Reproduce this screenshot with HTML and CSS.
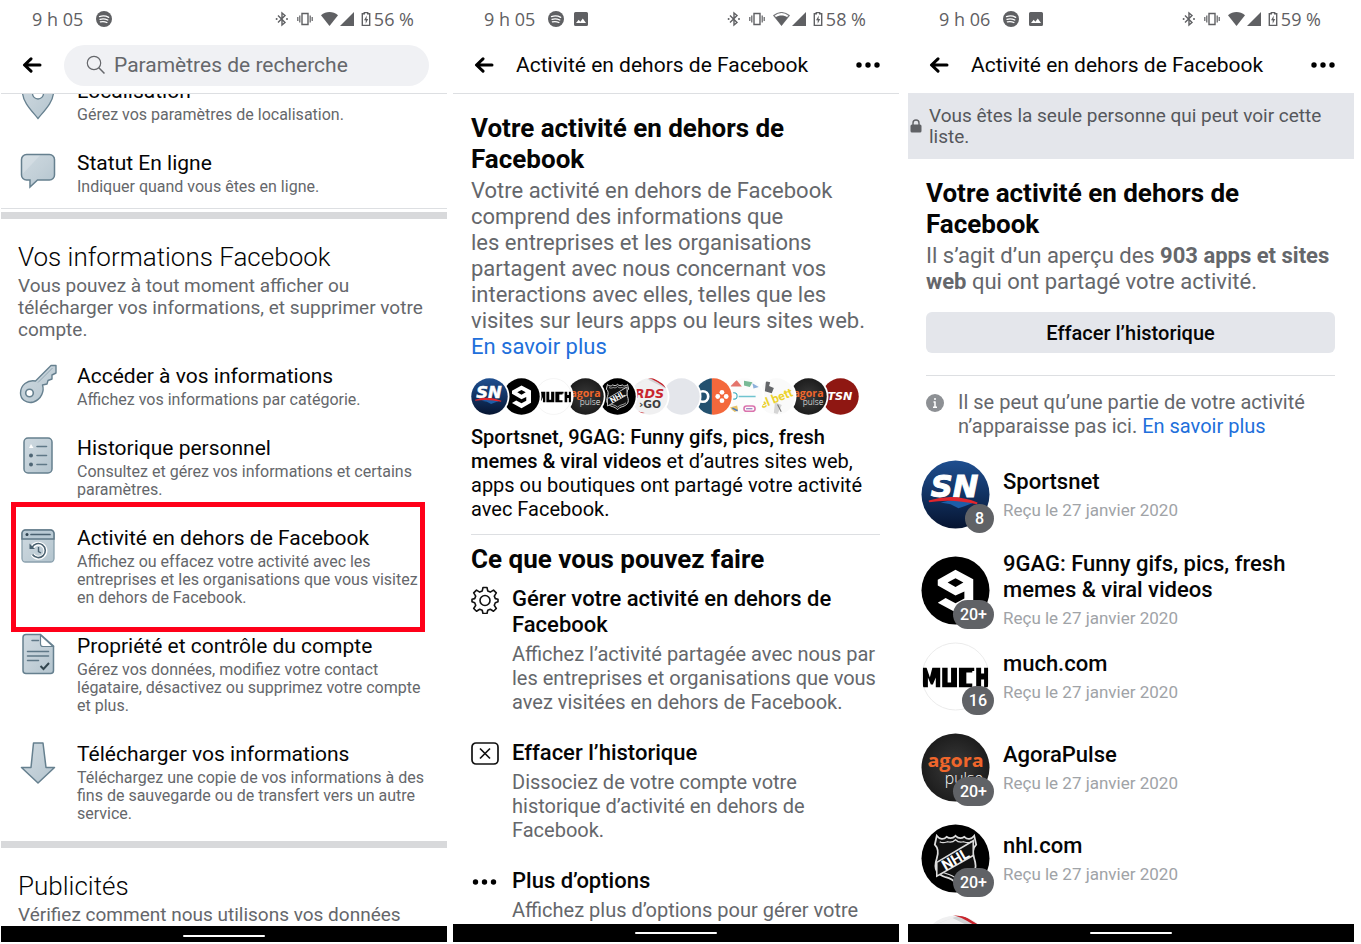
FILE: index.html
```html
<!DOCTYPE html>
<html lang="fr">
<head>
<meta charset="utf-8">
<meta name="viewport" content="width=device-width, initial-scale=1">
<title>Activité en dehors de Facebook</title>
<link rel="stylesheet" href="styles.css">
</head>
<body>
<svg class="defs" aria-hidden="true">
  <defs>
    <linearGradient id="g-steel" x1="0" y1="0" x2="1" y2="1"><stop offset="0" stop-color="#ced9e0"/><stop offset=".5" stop-color="#c3d0d8"/><stop offset="1" stop-color="#b3c4ce"/></linearGradient>
    <linearGradient id="g-sn" x1="0" y1="0" x2="0" y2="1"><stop offset="0" stop-color="#1f4f90"/><stop offset=".5" stop-color="#123262"/><stop offset="1" stop-color="#061430"/></linearGradient>
    <radialGradient id="g-dark"><stop offset="0" stop-color="#3a3a3a"/><stop offset="1" stop-color="#1d1d1d"/></radialGradient>
    <clipPath id="c-round"><circle cx="35" cy="35" r="34.500"/></clipPath>

    <symbol id="spotify" viewBox="0 0 16 16"><circle cx="8" cy="8" r="8" fill="#5f6063"/><path d="M3.500 5.600c3-1 6.500-.7 9.200.7M4 8.300c2.600-.8 5.400-.5 7.800.7M4.400 10.900c2.200-.6 4.500-.4 6.500.6" fill="none" stroke="#fff" stroke-width="1.300" stroke-linecap="round"/></symbol>
    <symbol id="photo" viewBox="0 0 14 14"><path fill="#5f6063" fill-rule="evenodd" d="M1.500 0h11A1.500 1.500 0 0 1 14 1.500v11a1.500 1.500 0 0 1-1.500 1.500h-11A1.500 1.500 0 0 1 0 12.500v-11A1.500 1.500 0 0 1 1.500 0zM2 11h10L8.800 6.500 6.400 9.700 4.700 7.700z"/></symbol>
    <symbol id="bluetooth" viewBox="0 0 14 16"><path d="M3 4.500l7 7L7 14V2l3 2.500-7 7" fill="none" stroke="#5f6063" stroke-width="1.400"/><circle cx="1.600" cy="8" r="1" fill="#5f6063"/><circle cx="12" cy="8" r="1" fill="#5f6063"/></symbol>
    <symbol id="vibrate" viewBox="0 0 16 14"><path d="M5 1.500h6v11H5z" fill="none" stroke="#5f6063" stroke-width="1.400"/><path d="M2.800 3.500v7M.8 5v4M13.200 3.500v7M15.200 5v4" stroke="#5f6063" stroke-width="1.200"/></symbol>
    <symbol id="wifi" viewBox="0 0 17 14"><path d="M0 3.300C5-1 12-1 17 3.300L8.500 14z" fill="#5f6063"/></symbol>
    <symbol id="wifi-mid" viewBox="0 0 17 14"><path d="M.8 3.500C5.500-.4 11.500-.4 16.200 3.500L8.500 13z" fill="none" stroke="#77787b" stroke-width="1.200"/><path d="M2.500 5.500c3.500-2.600 8.500-2.600 12 0L8.500 13.500z" fill="#5f6063"/></symbol>
    <symbol id="signal" viewBox="0 0 14 14"><path d="M14 0v14H0z" fill="#5f6063"/></symbol>
    <symbol id="battery" viewBox="0 0 10 14"><path d="M3.300.6h3.400v1.200h2v11.600H1.300V1.800h2z" fill="none" stroke="#5f6063" stroke-width="1.400"/><path d="M5.800 3.600L3 8.200h1.700v3.600L7.200 7H5.500z" fill="#5f6063"/></symbol>
    <symbol id="back" viewBox="0 0 20 16"><path d="M18 8H3M9 1.800L2.500 8 9 14.200" fill="none" stroke="#000" stroke-width="3" stroke-linecap="round" stroke-linejoin="round"/></symbol>
    <symbol id="dots" viewBox="0 0 26 8"><circle cx="4" cy="4" r="2.700"/><circle cx="13" cy="4" r="2.700"/><circle cx="22" cy="4" r="2.700"/></symbol>

    <symbol id="logo-sn" viewBox="0 0 70 70"><g clip-path="url(#c-round)"><path d="M0 0h70v70H0z" fill="url(#g-sn)"/><path d="M20 43q18-5 32 1l-8 3-6 2-8-4z" fill="#1d5ea8"/><text x="34" y="38" class="logo-sn" text-anchor="middle">SN</text><path d="M8 42q25-8 49 2-26-6-49-2z" fill="#e2262d" stroke="#e2262d" stroke-width="2"/></g></symbol>
    <symbol id="logo-9gag" viewBox="0 0 70 70"><circle cx="35" cy="35" r="34.500" fill="#000"/><path fill="#fff" fill-rule="evenodd" d="M35 14l18 9.500V47L35 57l-18-9.500 8-5L35 48l9-5v-7l-9 4-18-10v-6zM27 27l8 4.500 8-4.500-8-4.500z"/></symbol>
    <symbol id="logo-much" viewBox="0 0 70 70"><circle cx="35" cy="35" r="34" fill="#fff" stroke="#ebebeb"/><g clip-path="url(#c-round)"><path d="M2 26h66v20H2z" fill="#000"/><path d="M5 24l4 12 3-12zM7 48V36l3 7h2l3-7v12zM19.500 24h2v24h-2zM27 24h3.500v17H27zM36.500 24h2v24h-2zM46 31h6v-1.500h2V48h-2v-6h-6zM54 24h2v24h-2zM61 24h3v8h-3zM61 38h3v10h-3z" fill="#fff"/></g></symbol>
    <symbol id="logo-agora" viewBox="0 0 70 70"><circle cx="35" cy="35" r="34.500" fill="url(#g-dark)"/><text x="35" y="35" class="logo-agora" text-anchor="middle">agora</text><text x="63" y="52" class="logo-pulse" text-anchor="end">pulse</text></symbol>
    <symbol id="logo-nhl" viewBox="0 0 70 70"><circle cx="35" cy="35" r="34.500" fill="#000"/><path d="M16 12c3 4 7 4 10 1 3 2 6 2 9-1 3 3 6 3 9 1 3 3 7 3 10-1l2 9c-4 4-4 8-2 14 4 12-1 16-9 19-4 1-8 3-10 6-2-3-6-5-10-6-8-3-13-7-9-19 2-6 2-10-2-14z" fill="#111" stroke="#ddd" stroke-width="1.800"/><path d="M19 18c3 2 5 1 8 0 3 1 5 1 8-2 3 3 5 3 8 2 3 1 5 2 8 0M19 47c4 4 11 3 16 8 5-5 12-4 16-8" fill="none" stroke="#ddd" stroke-width="1.300"/><path d="M16 39l37-22v15L16 53z" fill="#111" stroke="#ddd" stroke-width="1.600"/><text x="35" y="41" transform="rotate(-30 35 36)" class="logo-nhl" text-anchor="middle">NHL</text></symbol>
    <symbol id="logo-rds" viewBox="0 0 70 70"><g clip-path="url(#c-round)"><path d="M0 0h70v70H0z" fill="#f0f0f1"/><path d="M8 12L40 0l26 14v6L32 3 14 10z" fill="#d2d3d5"/><path d="M32 0q14 3 38 22v-5L42 0z" fill="#c9252d"/><text x="35" y="38" class="logo-rds" text-anchor="middle">RDS</text><text x="36" y="57" class="logo-go" text-anchor="middle">›GO</text><path d="M12 63l14 3-9 2z" fill="#c9252d"/></g></symbol>
    <symbol id="logo-blank" viewBox="0 0 70 70"><circle cx="35" cy="35" r="34.500" fill="#e4e6eb"/></symbol>
    <symbol id="logo-pad" viewBox="0 0 70 70"><g clip-path="url(#c-round)"><path d="M0 0h32v70H0z" fill="#23516f"/><path d="M32 0h38v70H32z" fill="#f4683c"/><circle cx="15" cy="35" r="10" fill="none" stroke="#fff" stroke-width="5"/><g fill="#fff"><circle cx="43" cy="35" r="4.500"/><circle cx="59" cy="35" r="4.500"/><circle cx="51" cy="27" r="4.500"/><circle cx="51" cy="43" r="4.500"/></g></g></symbol>
    <symbol id="logo-mix" viewBox="0 0 70 70"><g clip-path="url(#c-round)"><path d="M0 0h70v70H0z" fill="#fcfcfc"/><path d="M8 16L20 4l10 12z" fill="#e4746c"/><path d="M34 5l16 3-5 9-11-3z" fill="#79ba96"/><path d="M50 10l12 7-10 3z" fill="#8cb0db"/><circle cx="15" cy="34" r="6" fill="none" stroke="#35a9bb" stroke-width="2"/><path d="M24 35h32" stroke="#6fc3cf" stroke-width="3"/><path d="M7 56l14-4 2 9-10 5z" fill="#e9c46b"/><path d="M12 57l10 5" stroke="#4d79b9" stroke-width="3"/><rect x="34" y="53" width="21" height="10" rx="5" fill="none" stroke="#da73ad" stroke-width="3"/><path d="M38 58h12" stroke="#8165b0" stroke-width="2"/></g></symbol>
    <symbol id="logo-bett" viewBox="0 0 70 70"><g clip-path="url(#c-round)"><path d="M0 0h70v70H0z" fill="#fafafa"/><path d="M15 6l8 2-2 7 9 4-4 10-13-4z" fill="#65676a"/><path d="M32 46l13 5-8 17-7-2z" fill="#d5d5d5"/><path d="M37 50l7 14" stroke="#777" stroke-width="2"/><text x="34" y="46" transform="rotate(-22 35 38)" class="logo-bett" text-anchor="middle">el bett</text></g></symbol>
    <symbol id="logo-tsn" viewBox="0 0 70 70"><circle cx="35" cy="35" r="34.500" fill="#8f1712"/><text x="34" y="42" class="logo-tsn" text-anchor="middle">TSN</text></symbol>
  </defs>
</svg>

<main class="screens">
  <section class="phone">
    <div class="status">
      <span class="clock">9 h 05</span><svg class="ic-16"><use href="#spotify"/></svg>
      <span class="status-right"><svg class="ic-bt"><use href="#bluetooth"/></svg><svg class="ic-vib"><use href="#vibrate"/></svg><svg class="ic-wifi"><use href="#wifi"/></svg><svg class="ic-sig"><use href="#signal"/></svg><svg class="ic-bat"><use href="#battery"/></svg><span>56 %</span></span>
    </div>
    <header class="bar">
      <button class="icon-button" aria-label="Retour"><svg class="ic-back"><use href="#back"/></svg></button>
      <label class="search"><svg class="ic-search" viewBox="0 0 20 20"><circle cx="8" cy="8" r="6.700" fill="none" stroke="#65676b" stroke-width="1.200"/><path d="M12.800 12.800l5.700 5.700" stroke="#65676b" stroke-width="1.500"/></svg><input type="search" placeholder="Paramètres de recherche" aria-label="Paramètres de recherche"></label>
    </header>
    <div class="content scrolled">
      <a class="setting" href="#">
        <svg class="setting-icon" viewBox="0 0 40 44"><path d="M20 40.500C14 33 4.500 24 4.500 14a15.500 15.500 0 0 1 31 0C35.500 24 26 33 20 40.500z" fill="url(#g-steel)" stroke="#66808f" stroke-width="1.300"/><circle cx="20" cy="15.500" r="5.500" fill="#fff" stroke="#66808f" stroke-width="1.300"/></svg>
        <span><b class="setting-title">Localisation</b><span class="setting-text">Gérez vos paramètres de localisation.</span></span>
      </a>
      <a class="setting" href="#">
        <svg class="setting-icon" viewBox="0 0 40 44"><path d="M8.500 4.500h23a5 5 0 0 1 5 5V25a5 5 0 0 1-5 5H19.500l-7.500 7v-7H8.500a5 5 0 0 1-5-5V9.500a5 5 0 0 1 5-5z" fill="url(#g-steel)" stroke="#66808f" stroke-width="1.500"/><path d="M4.500 24V10a5 5 0 0 1 5-4.500H22z" fill="#fff" opacity=".2"/></svg>
        <span><b class="setting-title">Statut En ligne</b><span class="setting-text">Indiquer quand vous êtes en ligne.</span></span>
      </a>
      <hr class="line">
      <hr class="band band-first">
      <h2 class="section-title">Vos informations Facebook</h2>
      <p class="section-text">Vous pouvez à tout moment afficher ou télécharger vos informations, et supprimer votre compte.</p>
      <a class="setting setting-first" href="#">
        <svg class="setting-icon" viewBox="0 0 40 44"><path d="M33 2.500h5v7.500l-4 2v4l-4 1.500-1 3.500-4.500 1c2 6-1 14-9 17C8 41 2.500 36 2.500 30c0-8 7-13.500 15-12z" fill="url(#g-steel)" stroke="#66808f" stroke-width="1.400" stroke-linejoin="round"/><path d="M20 19.500L34.500 5" stroke="#93a7b3" stroke-width="1"/><circle cx="11.500" cy="30" r="3.800" fill="#fff" stroke="#66808f" stroke-width="1.600"/></svg>
        <span><b class="setting-title">Accéder à vos informations</b><span class="setting-text">Affichez vos informations par catégorie.</span></span>
      </a>
      <a class="setting" href="#">
        <svg class="setting-icon" viewBox="0 0 40 44"><rect x="6" y="3" width="28" height="35" rx="4" fill="url(#g-steel)" stroke="#66808f" stroke-width="1.500"/><path d="M11 13l2-4 2.500 4z" fill="#fff"/><circle cx="13" cy="20.500" r="2" fill="#4e6675"/><circle cx="13" cy="29.500" r="2" fill="#4e6675"/><path d="M19 11.500h9.500M19 20.500h9.500M19 29.500h9.500" stroke="#5f7887" stroke-width="1.600" stroke-linecap="round"/></svg>
        <span><b class="setting-title">Historique personnel</b><span class="setting-text">Consultez et gérez vos informations et certains paramètres.</span></span>
      </a>
      <a class="setting highlighted" href="#">
        <svg class="setting-icon" viewBox="0 0 40 44"><rect x="4" y="5" width="32" height="32" rx="3.500" fill="url(#g-steel)" stroke="#8aa0ad" stroke-width="1.300"/><path d="M4 14V8.500A3.500 3.500 0 0 1 7.500 5h25A3.500 3.500 0 0 1 36 8.500V14z" fill="#b9cad4" stroke="#5f7887" stroke-width="1.500"/><circle cx="9" cy="9.500" r="1.500" fill="#2e4350"/><path d="M13 9.500h19" stroke="#4a6170" stroke-width="1.700" stroke-linecap="round"/><path d="M14 23a7 7 0 1 1 .5 6.500" fill="none" stroke="#fff" stroke-width="4"/><path d="M14 22.500a7 7 0 1 1 .5 7" fill="none" stroke="#4a6170" stroke-width="1.600"/><path d="M11.500 18.500v5.500h5.500z" fill="#4a6170"/><path d="M20.500 22v4.500l2.500 1.500" fill="none" stroke="#4a6170" stroke-width="1.400"/></svg>
        <span><b class="setting-title">Activité en dehors de Facebook</b><span class="setting-text">Affichez ou effacez votre activité avec les entreprises et les organisations que vous visitez en dehors de Facebook.</span></span>
      </a>
      <a class="setting" href="#">
        <svg class="setting-icon" viewBox="0 0 40 44"><path d="M8 1.500h14.500L35.500 13v24.500a3 3 0 0 1-3 3H8a3 3 0 0 1-3-3v-33a3 3 0 0 1 3-3z" fill="url(#g-steel)" stroke="#66808f" stroke-width="1.500"/><path d="M22.500 2v9a2.500 2.500 0 0 0 2.500 2.500h10z" fill="#fff" stroke="#66808f" stroke-width="1.200"/><path d="M14 7.500h6.500M9.500 18.500h21M9.500 23h21M9.500 27.500h11" stroke="#5f7887" stroke-width="1.500" stroke-linecap="round"/><path d="M22.500 33l3 3 5.500-6" fill="none" stroke="#33464f" stroke-width="2"/></svg>
        <span><b class="setting-title">Propriété et contrôle du compte</b><span class="setting-text">Gérez vos données, modifiez votre contact légataire, désactivez ou supprimez votre compte et plus.</span></span>
      </a>
      <a class="setting" href="#">
        <svg class="setting-icon" viewBox="0 0 40 44"><path d="M15.500 2h9.500l3 24.500h8.500L20 42 3.500 26.500H13z" fill="url(#g-steel)" stroke="#66808f" stroke-width="1.500" stroke-linejoin="round"/></svg>
        <span><b class="setting-title">Télécharger vos informations</b><span class="setting-text">Téléchargez une copie de vos informations à des fins de sauvegarde ou de transfert vers un autre service.</span></span>
      </a>
      <hr class="band band-last">
      <h2 class="section-title">Publicités</h2>
      <p class="section-text">Vérifiez comment nous utilisons vos données</p>
    </div>
    <div class="navbar navbar-slim"><span class="home"></span></div>
  </section>

  <section class="phone phone-middle">
    <div class="status">
      <span class="clock">9 h 05</span><svg class="ic-16"><use href="#spotify"/></svg><svg class="ic-14"><use href="#photo"/></svg>
      <span class="status-right"><svg class="ic-bt"><use href="#bluetooth"/></svg><svg class="ic-vib"><use href="#vibrate"/></svg><svg class="ic-wifi"><use href="#wifi-mid"/></svg><svg class="ic-sig"><use href="#signal"/></svg><svg class="ic-bat"><use href="#battery"/></svg><span>58 %</span></span>
    </div>
    <header class="bar">
      <button class="icon-button" aria-label="Retour"><svg class="ic-back"><use href="#back"/></svg></button>
      <span class="bar-title">Activité en dehors de Facebook</span>
      <button class="icon-button" aria-label="Plus"><svg class="ic-dots"><use href="#dots"/></svg></button>
    </header>
    <div class="content padded">
      <h1 class="headline">Votre activité en dehors de Facebook</h1>
      <p class="lead">Votre activité en dehors de Facebook comprend des informations que les&nbsp;entreprises et les organisations partagent avec nous concernant vos interactions avec elles, telles que les visites sur leurs apps ou leurs sites web. <a class="link" href="#">En savoir plus</a></p>
      <svg class="logos" viewBox="0 0 388 38" role="img" aria-label="Apps et sites web">
        <g fill="#fff">
          <use href="#logo-tsn" x="351" y="1" width="37" height="37"/><circle cx="337.500" cy="19.500" r="20"/>
          <use href="#logo-agora" x="319" y="1" width="37" height="37"/><circle cx="305.500" cy="19.500" r="20"/>
          <use href="#logo-bett" x="287" y="1" width="37" height="37"/><circle cx="273.500" cy="19.500" r="20"/>
          <use href="#logo-mix" x="255" y="1" width="37" height="37"/><circle cx="242.500" cy="19.500" r="20"/>
          <use href="#logo-pad" x="224" y="1" width="37" height="37"/><circle cx="210.500" cy="19.500" r="20"/>
          <use href="#logo-blank" x="192" y="1" width="37" height="37"/><circle cx="178.500" cy="19.500" r="20"/>
          <use href="#logo-rds" x="160" y="1" width="37" height="37"/><circle cx="146.500" cy="19.500" r="20"/>
          <use href="#logo-nhl" x="128" y="1" width="37" height="37"/><circle cx="114.500" cy="19.500" r="20"/>
          <use href="#logo-agora" x="96" y="1" width="37" height="37"/><circle cx="82.500" cy="19.500" r="20"/>
          <use href="#logo-much" x="64" y="1" width="37" height="37"/><circle cx="50.500" cy="19.500" r="20"/>
          <use href="#logo-9gag" x="32" y="1" width="37" height="37"/><circle cx="18.500" cy="19.500" r="20"/>
          <use href="#logo-sn" x="0" y="1" width="37" height="37"/>
        </g>
      </svg>
      <p class="summary"><strong>Sportsnet, 9GAG: Funny gifs, pics, fresh memes &amp; viral videos</strong> et d’autres sites web, apps ou boutiques ont partagé votre activité avec Facebook.</p>
      <hr class="line">
      <h2 class="headline headline-sub">Ce que vous pouvez faire</h2>
      <a class="action" href="#">
        <svg class="action-icon" viewBox="0 0 28 28"><path d="M12 1.500h4l.8 3.600 2.500 1 3.200-2 2.800 2.800-2 3.200 1 2.500 2.700.6v2.600l-2.700 1-1 2.500 2 3.200-2.800 2.800-3.200-2-2.500 1-.8 3.200h-4l-.8-3.200-2.500-1-3.200 2-2.800-2.800 2-3.200-1-2.500-2.700-1v-2.600l2.700-.6 1-2.500-2-3.200 2.800-2.800 3.200 2 2.500-1z" fill="none" stroke="#111" stroke-width="1.600" stroke-linejoin="round"/><circle cx="14" cy="14.500" r="5" fill="none" stroke="#111" stroke-width="1.600"/></svg>
        <span><b class="action-title">Gérer votre activité en dehors de Facebook</b><span class="action-text">Affichez l’activité partagée avec nous par les entreprises et organisations que vous avez visitées en dehors de Facebook.</span></span>
      </a>
      <a class="action" href="#">
        <svg class="action-icon" viewBox="0 0 28 28"><rect x="1" y="3" width="26" height="21" rx="4" fill="none" stroke="#111" stroke-width="1.700"/><path d="M9 8.500l10 10M19 8.500l-10 10" stroke="#111" stroke-width="1.700"/></svg>
        <span><b class="action-title">Effacer l’historique</b><span class="action-text">Dissociez de votre compte votre historique d’activité en dehors de Facebook.</span></span>
      </a>
      <a class="action" href="#">
        <svg class="action-icon" viewBox="0 0 28 28"><circle cx="4.500" cy="14" r="2.700"/><circle cx="13.500" cy="14" r="2.700"/><circle cx="22.500" cy="14" r="2.700"/></svg>
        <span><b class="action-title">Plus d’options</b><span class="action-text">Affichez plus d’options pour gérer votre</span></span>
      </a>
    </div>
    <div class="navbar"><span class="home"></span></div>
  </section>

  <section class="phone phone-last">
    <div class="status">
      <span class="clock">9 h 06</span><svg class="ic-16"><use href="#spotify"/></svg><svg class="ic-14"><use href="#photo"/></svg>
      <span class="status-right"><svg class="ic-bt"><use href="#bluetooth"/></svg><svg class="ic-vib"><use href="#vibrate"/></svg><svg class="ic-wifi"><use href="#wifi"/></svg><svg class="ic-sig"><use href="#signal"/></svg><svg class="ic-bat"><use href="#battery"/></svg><span>59 %</span></span>
    </div>
    <header class="bar bar-plain">
      <button class="icon-button" aria-label="Retour"><svg class="ic-back"><use href="#back"/></svg></button>
      <span class="bar-title">Activité en dehors de Facebook</span>
      <button class="icon-button" aria-label="Plus"><svg class="ic-dots"><use href="#dots"/></svg></button>
    </header>
    <div class="notice"><svg class="ic-lock" viewBox="0 0 12 14"><rect x=".5" y="5.500" width="11" height="8" rx="1.500" fill="#606266"/><path d="M3 6V4a3 3 0 0 1 6 0v2" fill="none" stroke="#606266" stroke-width="1.400"/></svg><p>Vous êtes la seule personne qui peut voir cette liste.</p></div>
    <div class="content padded">
      <h1 class="headline">Votre activité en dehors de Facebook</h1>
      <p class="lead">Il s’agit d’un aperçu des <strong>903 apps et sites web</strong> qui ont partagé votre activité.</p>
      <button class="clear">Effacer l’historique</button>
      <hr class="line">
      <div class="info"><svg class="ic-info" viewBox="0 0 18 18"><circle cx="9" cy="9" r="9" fill="#8d9094"/><path d="M9 4v2M9 7.500v5.500M7.500 8h2M7 13.200h4" stroke="#fff" stroke-width="1.500"/></svg><p>Il se peut qu’une partie de votre activité n’apparaisse pas ici. <a class="link" href="#">En savoir plus</a></p></div>
      <ul class="apps">
        <li class="app"><span class="avatar"><svg class="logo"><use href="#logo-sn"/></svg><span class="badge">8</span></span><span><b class="app-name">Sportsnet</b><span class="app-date">Reçu le 27 janvier 2020</span></span></li>
        <li class="app app-tall"><span class="avatar"><svg class="logo"><use href="#logo-9gag"/></svg><span class="badge">20+</span></span><span><b class="app-name">9GAG: Funny gifs, pics, fresh memes &amp; viral videos</b><span class="app-date">Reçu le 27 janvier 2020</span></span></li>
        <li class="app"><span class="avatar"><svg class="logo"><use href="#logo-much"/></svg><span class="badge">16</span></span><span><b class="app-name">much.com</b><span class="app-date">Reçu le 27 janvier 2020</span></span></li>
        <li class="app"><span class="avatar"><svg class="logo"><use href="#logo-agora"/></svg><span class="badge">20+</span></span><span><b class="app-name">AgoraPulse</b><span class="app-date">Reçu le 27 janvier 2020</span></span></li>
        <li class="app"><span class="avatar"><svg class="logo"><use href="#logo-nhl"/></svg><span class="badge">20+</span></span><span><b class="app-name">nhl.com</b><span class="app-date">Reçu le 27 janvier 2020</span></span></li>
        <li class="app"><span class="avatar"><svg class="logo"><use href="#logo-rds"/></svg></span></li>
      </ul>
    </div>
    <div class="navbar"><span class="home"></span></div>
  </section>
</main>
</body>
</html>
```
FILE: styles.css
```css
* { box-sizing: border-box; }
body { margin: 0; background: #fff; color: #050505; font-family: Roboto, "Liberation Sans", sans-serif; }
h1, h2, p, ul { margin: 0; padding: 0; }
hr { border: 0; margin: 0; }
svg { display: block; flex: none; }
a { color: inherit; text-decoration: none; }
button { border: 0; background: none; padding: 0; font: inherit; color: inherit; cursor: pointer; }
.defs { position: absolute; width: 0; height: 0; }

.screens { display: flex; height: 100vh; padding: 0 7px 2px 1px; }
.phone { flex: 1 1 0; min-width: 0; display: flex; flex-direction: column; overflow: hidden; }
.phone-middle { margin-left: 6px; }
.phone-last { margin-left: 9px; }

.status { display: flex; align-items: center; flex: none; height: 37px; padding: 0 33px 0 31px; color: #5f6063; font: 18px/24px "Open Sans", sans-serif; }
.clock { margin-right: 13px; }
.status-right { display: flex; align-items: center; margin-left: auto; }
.ic-16 { width: 16px; height: 16px; }
.ic-14 { width: 14px; height: 14px; margin-left: 10px; }
.ic-bt { width: 14px; height: 16px; margin-right: 8px; }
.ic-vib { width: 16px; height: 14px; margin-right: 8px; }
.ic-wifi { width: 17px; height: 14px; margin-right: 2px; }
.ic-sig { width: 14px; height: 14px; margin-right: 7px; }
.ic-bat { width: 10px; height: 14px; margin-right: 3px; }

.bar { display: flex; align-items: center; flex: none; height: 57px; padding: 0 18px 0 21px; border-bottom: 1px solid #dddfe2; }
.bar-plain { height: 56px; border-bottom: 0; }
.ic-back { width: 20px; height: 16px; }
.ic-dots { width: 26px; height: 8px; }
.bar-title { flex: 1; margin-left: 22px; font-size: 21px; line-height: 28px; white-space: nowrap; }
.search { flex: 1; display: flex; align-items: center; height: 41px; margin-left: 22px; padding: 0 22px; border-radius: 21px; background: #f0f1f4; }
.ic-search { width: 20px; height: 20px; margin-right: 8px; }
.search input { flex: 1; min-width: 0; padding: 0; border: 0; outline: 0; background: none; font: 21px/28px Roboto, sans-serif; color: #65676b; }
.search input::placeholder { color: #65676b; opacity: 1; }

.content { flex: 1; min-height: 0; overflow: hidden; }
.padded { padding: 19px 19px 0 18px; }
.line { height: 1px; background: #dddfe2; }
.band { height: 7px; background: #d8d9db; }
.band-first { margin-top: 3px; }
.band-last { margin-top: 6px; }

.setting { position: relative; display: flex; gap: 19px; padding: 14px 20px 12px 17px; }
.scrolled > .setting:first-child { margin-top: -30px; }
.setting-first { margin-top: 8px; }
.setting-icon { width: 40px; height: 44px; margin-bottom: -10px; }
.setting-title { display: block; font-size: 21px; line-height: 26px; font-weight: 400; }
.setting-text { display: block; margin-top: 2px; font-size: 16px; line-height: 18px; color: #65676b; }
.highlighted::after { content: ""; position: absolute; inset: -9px 22px -13px 10px; border: 5px solid #ff0019; }
.section-title { margin-top: 22px; padding: 0 17px; font-size: 26px; line-height: 32px; font-weight: 300; }
.section-text { margin-top: 2px; padding: 0 17px; font-size: 19px; line-height: 22px; color: #65676b; }

.headline { font-size: 26px; line-height: 31px; font-weight: 700; }
.headline-sub { margin: 9px 0 11px; }
.lead { margin-top: 3px; font-size: 22px; line-height: 26px; color: #65676b; }
.link { color: #216fdb; }
.logos { width: 388px; height: 38px; margin-top: 17px; }
.summary { margin: 10px 0 13px; font-size: 20px; line-height: 24px; }
.summary strong { font-weight: 500; }
.action { display: flex; gap: 13px; margin-bottom: 26px; }
.action-icon { width: 28px; height: 28px; }
.action-title { display: block; font-size: 22px; line-height: 26px; font-weight: 500; }
.action-text { display: block; margin-top: 4px; font-size: 20px; line-height: 24px; color: #65676b; }

.notice { display: flex; align-items: center; gap: 7px; flex: none; padding: 12px 24px 12px 2px; background: #e4e6eb; color: #55575b; font-size: 19px; line-height: 21px; }
.ic-lock { width: 12px; height: 14px; }
.clear { display: block; width: 100%; height: 41px; margin: 17px 0 22px; border-radius: 6px; background: #e4e6eb; font-size: 20px; font-weight: 500; }
.info { display: flex; gap: 14px; margin: 14px 0 11px; font-size: 20px; line-height: 24px; color: #65676b; }
.ic-info { width: 18px; height: 18px; margin-top: 4px; }
.apps { list-style: none; margin-left: -5px; }
.app { display: flex; align-items: center; gap: 13px; min-height: 91px; }
.app-tall { padding-top: 9px; }
.avatar { position: relative; flex: none; }
.logo { width: 69px; height: 69px; }
.badge { position: absolute; right: -4px; bottom: -4px; min-width: 29px; height: 29px; padding: 0 7px; border-radius: 15px; background: #606266; color: #fff; font-size: 16px; line-height: 29px; font-weight: 500; text-align: center; }
.app-name { display: block; font-size: 22px; line-height: 26px; font-weight: 500; }
.app-date { display: block; margin-top: 4px; font-size: 17px; line-height: 22px; color: #a0a3a7; }

.navbar { display: flex; align-items: center; justify-content: center; flex: none; height: 18px; background: #000; }
.navbar-slim { height: 16px; padding-top: 4px; }
.home { width: 82px; height: 2px; border-radius: 1px; background: #fff; }

.logo-sn { font: italic 700 31px "DejaVu Sans", sans-serif; fill: #fff; stroke: #fff; stroke-width: 1px; }
.logo-agora { font: 700 20px "Open Sans", sans-serif; fill: #f0662b; }
.logo-pulse { font: 300 16px "Open Sans", sans-serif; fill: #fff; }
.logo-nhl { font: 700 15px Roboto, sans-serif; fill: #fff; }
.logo-rds { font: italic 700 24px "DejaVu Sans", sans-serif; fill: #c9252d; }
.logo-go { font: 700 20px "DejaVu Sans", sans-serif; fill: #3c3d40; }
.logo-bett { font: 700 23px Roboto, sans-serif; fill: #ecd22c; }
.logo-tsn { font: italic 700 21px "DejaVu Sans", sans-serif; fill: #fff; }
```
